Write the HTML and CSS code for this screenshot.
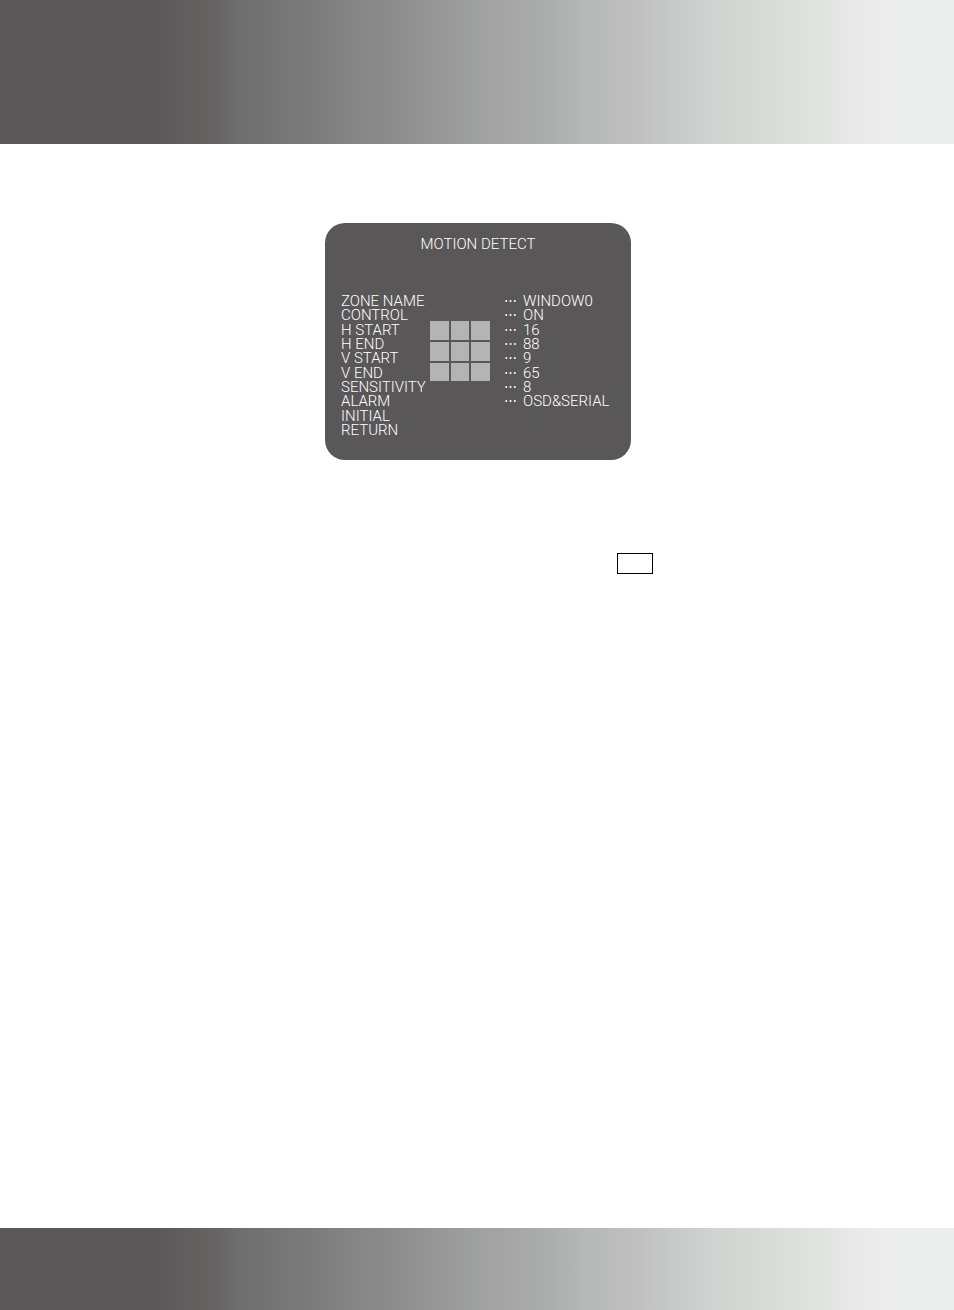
FILE: index.html
```html
<!DOCTYPE html>
<html lang="en">
<head>
	<meta charset="UTF-8">
	<title>MOTION DETECT</title>
	<link rel="stylesheet" href="styles.css">
</head>
<body>
	<header class="band top"></header>
	<main>
		<section class="osd">
			<h1>MOTION DETECT</h1>
			<table class="menu">
				<tr>
					<th scope="row">ZONE NAME</th>
					<td class="zone" rowspan="8">
						<div class="cells">
							<i></i><i></i><i></i>
							<i></i><i></i><i></i>
							<i></i><i></i><i></i>
						</div>
					</td>
					<td class="dots">⋯</td><td>WINDOW0</td>
				</tr>
				<tr><th scope="row">CONTROL</th><td class="dots">⋯</td><td>ON</td></tr>
				<tr><th scope="row">H START</th><td class="dots">⋯</td><td>16</td></tr>
				<tr><th scope="row">H END</th><td class="dots">⋯</td><td>88</td></tr>
				<tr><th scope="row">V START</th><td class="dots">⋯</td><td>9</td></tr>
				<tr><th scope="row">V END</th><td class="dots">⋯</td><td>65</td></tr>
				<tr><th scope="row">SENSITIVITY</th><td class="dots">⋯</td><td>8</td></tr>
				<tr><th scope="row">ALARM</th><td class="dots">⋯</td><td>OSD&amp;SERIAL</td></tr>
				<tr><th scope="row">INITIAL</th></tr>
				<tr><th scope="row">RETURN</th></tr>
			</table>
		</section>
		<div class="key"><span></span></div>
	</main>
	<footer class="band bottom"></footer>
</body>
</html>
```
FILE: styles.css
```css
*{
	margin: 0;
	padding: 0;
	box-sizing: border-box;
}
body{
	min-height: 100vh;
	display: flex;
	flex-direction: column;
	background-color: #fff;
	font-family: Roboto, "Liberation Sans", sans-serif;
	font-weight: 300;
	font-size: 15px;
}
.band{
	background: linear-gradient(to right, #5a5758 16%, #686565 23%, #6d6e6d 25%, #7c7c7c 33%, #979797 46%, #9c9f9d 49%, #a5a5a5 53%, #adaeaf 58%, #b5b8b6 61%, #c0c0c0 67%, #c8cacb 71%, #d1d3d1 75%, #dadcda 81%, #e3e5e3 87%, #ececec 92%, #eceeed 93%);
}
.top{
	height: 144px;
}
.bottom{
	height: 82px;
}
main{
	flex: 1;
	padding: 79px 0 0 2px;
}
/* on-screen menu */
.osd{
	width: 306px;
	margin: 0 auto;
	padding: 13px 16px 23px;
	border-radius: 20px;
	background-color: #5a5758;
	color: #fff;
}
.osd h1{
	margin-bottom: 42px;
	font-size: 15px;
	font-weight: 300;
	line-height: 16px;
	text-align: center;
}
.menu{
	width: 100%;
	height: 143px;
	border-collapse: collapse;
	line-height: 14px;
	white-space: nowrap;
}
.menu th{
	width: 89px;
	font-weight: 300;
	text-align: left;
}
.menu .zone{
	width: 74px;
	vertical-align: middle;
}
.menu .dots{
	width: 19px;
	font-size: 13px;
}
.cells{
	width: 60px;
	height: 60px;
	display: grid;
	grid-template-columns: repeat(3, 1fr);
	gap: 2px;
}
.cells i{
	background-color: #b4b4b4;
}
.key{
	display: flex;
	justify-content: center;
	margin-top: 93px;
	padding-left: 314px;
}
.key span{
	width: 36px;
	height: 21px;
	border: 1px solid #000;
}
```
